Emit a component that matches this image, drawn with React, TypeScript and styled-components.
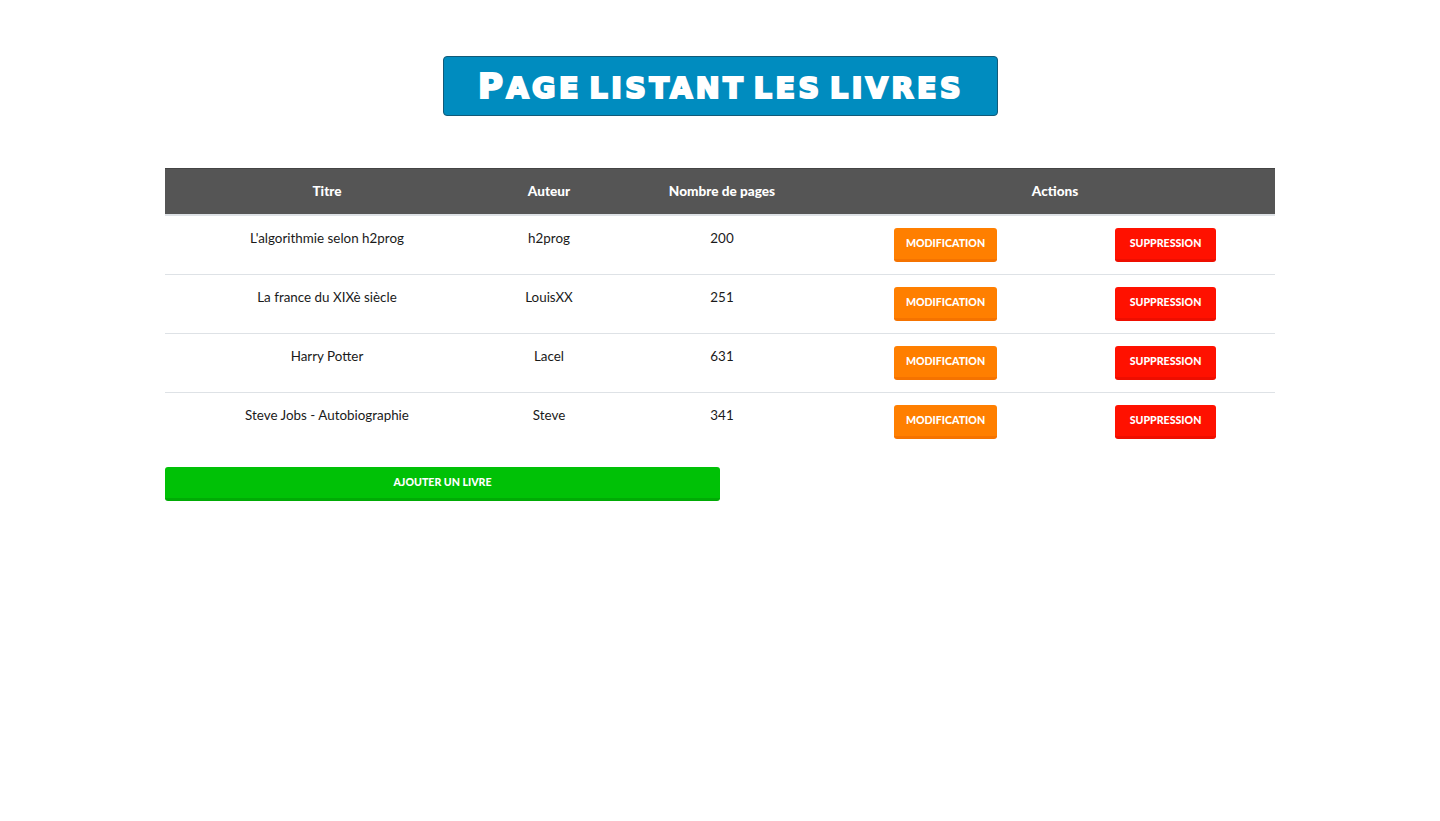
import React from "react";
import styled, { createGlobalStyle } from "styled-components";

const Global = createGlobalStyle`
  html, body { margin: 0; padding: 0; background: #fff; }
  body { font-family: Lato, "Noto Sans", sans-serif; color: #212529; font-size: 13.4px; }
`;

const Page = styled.main`
  width: 1110px;
  margin: 0 auto;
  padding-top: 56px;
`;

const TitleBox = styled.h1`
  width: 555px;
  height: 60px;
  margin: 0 auto 52px;
  padding: 2px 0 0 2px;
  box-sizing: border-box;
  display: flex;
  align-items: center;
  justify-content: center;
  background: #008cbf;
  border: 1px solid #125a78;
  border-radius: 4px;
`;

const TitleText = styled.span`
  display: block;
  color: #fff;
  font-family: "DejaVu Sans", sans-serif;
  font-weight: 700;
  text-transform: uppercase;
  font-size: 28.5px;
  line-height: 34px;
  letter-spacing: 3.55px;
  word-spacing: -6px;
  white-space: nowrap;
  -webkit-text-stroke: 2.2px #fff;

  &::first-letter {
    font-size: 34px;
  }
`;

const Table = styled.table`
  width: 1110px;
  table-layout: fixed;
  border-collapse: separate;
  border-spacing: 0;
  margin-bottom: 16px;
`;

const HeadCell = styled.th`
  height: 48px;
  padding: 0 0 1px;
  background: #555;
  color: #fff;
  font-size: 13.6px;
  font-weight: 900;
  text-align: center;
  vertical-align: middle;
  border-top: 1px solid #444;
  border-bottom: 2px solid #dee2e6;
  box-sizing: border-box;
`;

const Cell = styled.td<{ $first?: boolean }>`
  padding: 12px 0 0;
  text-align: center;
  vertical-align: top;
  box-sizing: border-box;
  height: ${(p) => (p.$first ? "58px" : "59px")};
  line-height: 20px;
  font-size: 13.4px;
  color: #1a1a1a;
  border-top: ${(p) => (p.$first ? "0" : "1px solid #dee2e6")};
`;

const Action = styled.button<{ $bg: string; $edge: string; $w: number }>`
  display: block;
  margin: 0 auto;
  width: ${(p) => p.$w}px;
  height: 34px;
  padding: 0 0 1px;
  box-sizing: border-box;
  border: 0;
  border-bottom: 3px solid ${(p) => p.$edge};
  border-radius: 3px;
  background: ${(p) => p.$bg};
  color: #fff;
  font-family: Lato, "Noto Sans", sans-serif;
  font-size: 10.6px;
  font-weight: 900;
  text-transform: uppercase;
`;

const AddAction = styled(Action)`
  margin: 0;
`;

const books = [
  ["L'algorithmie selon h2prog", "h2prog", "200"],
  ["La france du XIXè siècle", "LouisXX", "251"],
  ["Harry Potter", "Lacel", "631"],
  ["Steve Jobs - Autobiographie", "Steve", "341"],
];

const widths = [324, 120, 226, 221, 219];

export default function App() {
  return (
    <>
      <Global />
      <Page>
        <TitleBox>
          <TitleText>Page listant les livres</TitleText>
        </TitleBox>
        <Table>
          <colgroup>
            {widths.map((w, i) => (
              <col key={i} width={w} />
            ))}
          </colgroup>
          <thead>
            <tr>
              <HeadCell>Titre</HeadCell>
              <HeadCell>Auteur</HeadCell>
              <HeadCell>Nombre de pages</HeadCell>
              <HeadCell colSpan={2}>Actions</HeadCell>
            </tr>
          </thead>
          <tbody>
            {books.map((b, i) => (
              <tr key={b[0]}>
                <Cell $first={i === 0}>{b[0]}</Cell>
                <Cell $first={i === 0}>{b[1]}</Cell>
                <Cell $first={i === 0}>{b[2]}</Cell>
                <Cell $first={i === 0}>
                  <Action $bg="#ff7f00" $edge="#f57300" $w={103}>Modification</Action>
                </Cell>
                <Cell $first={i === 0}>
                  <Action $bg="#ff1100" $edge="#ee0e00" $w={101}>Suppression</Action>
                </Cell>
              </tr>
            ))}
          </tbody>
        </Table>
        <AddAction $bg="#00c106" $edge="#00ab05" $w={555}>Ajouter un livre</AddAction>
      </Page>
    </>
  );
}
